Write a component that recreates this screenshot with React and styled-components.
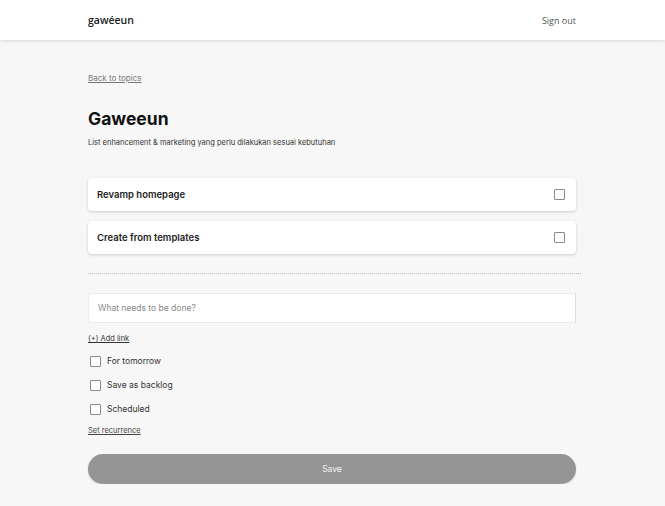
import React from "react";
import styled, { createGlobalStyle } from "styled-components";

const Global = createGlobalStyle`
  html, body { margin: 0; padding: 0; background: #f7f7f7; }
  body { font-family: Inter, "Noto Sans", sans-serif; color: #1c1c1c; }
  * { box-sizing: border-box; }
`;

const Header = styled.header`
  height: 40px;
  background: #fff;
  box-shadow: 0 1px 4px rgba(0,0,0,0.12);
  display: flex;
  align-items: center;
  justify-content: space-between;
  padding: 0 89px 0 88px;
`;

const Logo = styled.div`
  font-family: "Open Sans", sans-serif;
  font-size: 10.5px;
  font-weight: 600;
  color: #222;
`;

const SignOut = styled.a`
  font-family: "Open Sans", sans-serif;
  font-size: 9px;
  color: #555;
`;

const Main = styled.main`
  width: 488px;
  margin: 0 0 0 88px;
  padding-top: 33px;
  display: flex;
  flex-direction: column;
`;

const SmallLink = styled.a`
  font-size: ${p => p.$size || 8}px;
  color: ${p => p.$color || "#777"};
  text-decoration: underline;
  text-underline-offset: 1px;
  align-self: flex-start;
  margin-top: ${p => p.$top || 0}px;
`;

const Title = styled.h1`
  margin: 24px 0 0;
  font-size: 17.5px;
  font-weight: 700;
  color: #111;
  line-height: 24px;
`;

const Subtitle = styled.p`
  margin: 7px 0 0;
  font-size: 7.5px;
  color: #333;
`;

const CardList = styled.div`
  margin-top: 31px;
  display: flex;
  flex-direction: column;
  gap: 10px;
`;

const Card = styled.div`
  height: 33px;
  background: #fff;
  border-radius: 4px;
  box-shadow: 0 1px 3px rgba(0,0,0,0.18);
  display: flex;
  align-items: center;
  justify-content: space-between;
  padding: 0 11px 0 9px;
  font-size: 9.5px;
  font-weight: 600;
  color: #222;
`;

const Box = styled.span`
  width: 11px;
  height: 11px;
  border: 1px solid #8a8a8a;
  border-radius: 1px;
  background: #fff;
  flex-shrink: 0;
`;

const Divider = styled.div`
  margin: 19px -5px 0 0;
  border-top: 1px dotted #bbb;
`;

const Input = styled.div`
  margin-top: 19px;
  height: 30px;
  background: #fff;
  border: 1px solid #ececec;
  border-right-color: #ddd;
  display: flex;
  align-items: center;
  padding-left: 9px;
  font-size: 8.5px;
  color: #888;
`;

const Options = styled.div`
  margin-top: 12px;
  display: flex;
  flex-direction: column;
  gap: 12px;
`;

const Option = styled.label`
  display: flex;
  align-items: center;
  gap: 6px;
  padding-left: 2px;
  font-size: 8.5px;
  color: #333;
  height: 12px;
`;

const Save = styled.button`
  margin-top: 19px;
  height: 30px;
  border: none;
  border-radius: 15px;
  background: #959595;
  color: #f2f2f2;
  font-family: Inter, sans-serif;
  font-size: 8.5px;
  box-shadow: 0 1px 2px rgba(0,0,0,0.15);
`;

export default function App() {
  return (
    <>
      <Global />
      <Header>
        <Logo>gawéeun</Logo>
        <SignOut>Sign out</SignOut>
      </Header>
      <Main>
        <SmallLink $size={8} $color="#777">Back to topics</SmallLink>
        <Title>Gaweeun</Title>
        <Subtitle>List enhancement &amp; marketing yang perlu dilakukan sesuai kebutuhan</Subtitle>
        <CardList>
          <Card>Revamp homepage<Box /></Card>
          <Card>Create from templates<Box /></Card>
        </CardList>
        <Divider />
        <Input>What needs to be done?</Input>
        <SmallLink $size={7.5} $color="#333" $top={11}>(+) Add link</SmallLink>
        <Options>
          <Option><Box />For tomorrow</Option>
          <Option><Box />Save as backlog</Option>
          <Option><Box />Scheduled</Option>
        </Options>
        <SmallLink $size={7.5} $color="#444" $top={11}>Set recurrence</SmallLink>
        <Save>Save</Save>
      </Main>
    </>
  );
}
